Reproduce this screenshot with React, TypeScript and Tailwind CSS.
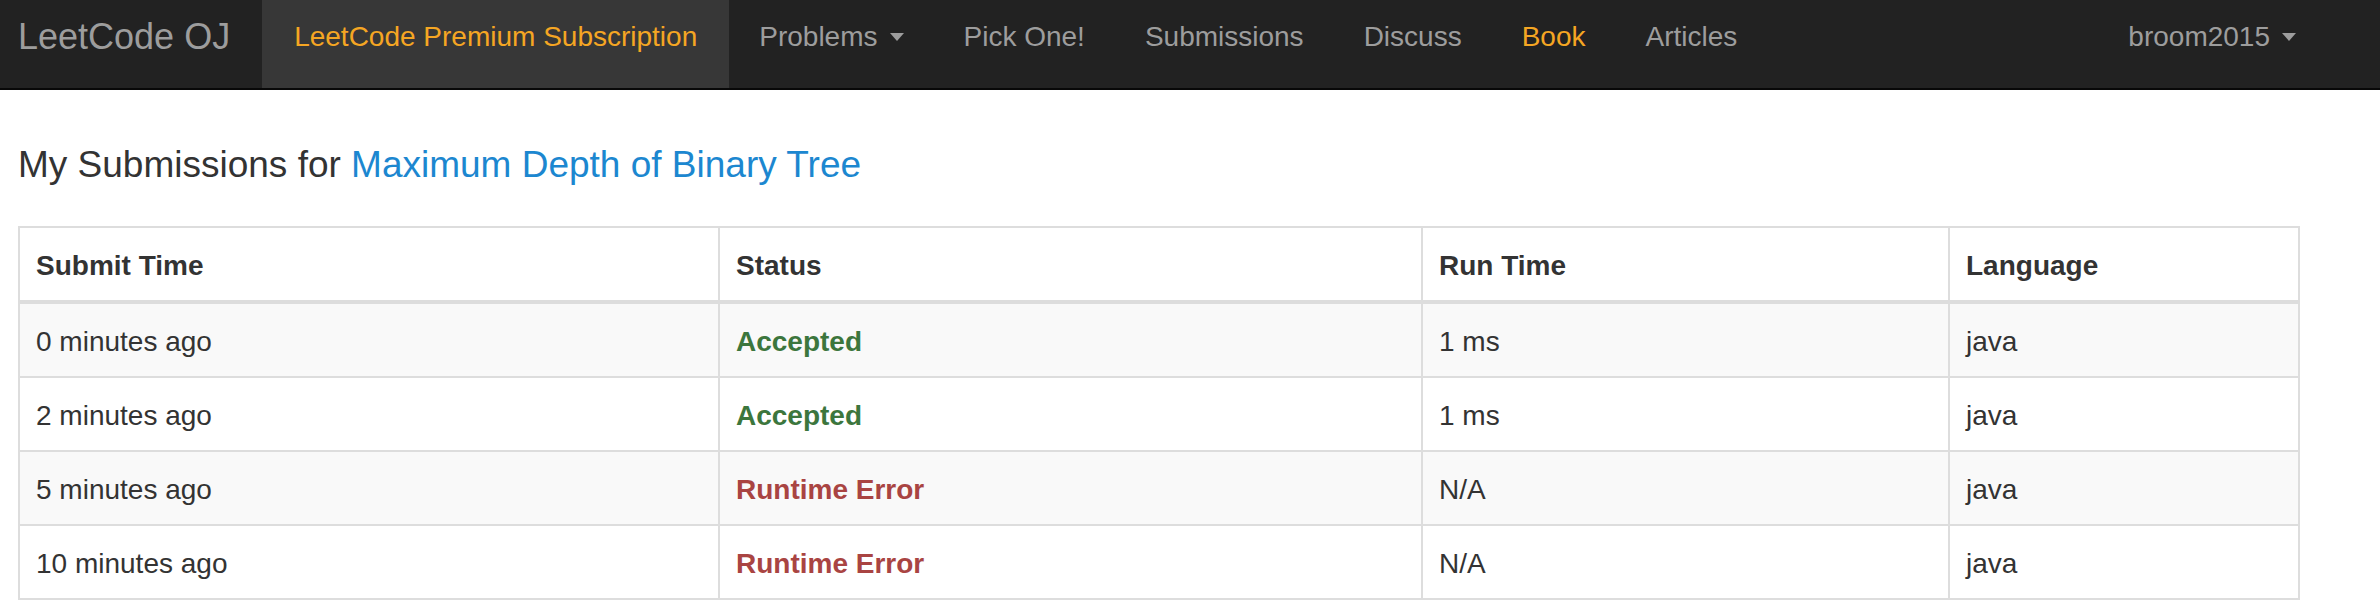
const submissions = [
  { time: "0 minutes ago", status: "Accepted", runtime: "1 ms", lang: "java" },
  { time: "2 minutes ago", status: "Accepted", runtime: "1 ms", lang: "java" },
  { time: "5 minutes ago", status: "Runtime Error", runtime: "N/A", lang: "java" },
  { time: "10 minutes ago", status: "Runtime Error", runtime: "N/A", lang: "java" },
];

function Caret() {
  return (
    <svg className="ml-[12px] mt-[16px] h-[8px] w-[14px]" viewBox="0 0 14 8">
      <path d="M0 0 L14 0 L7 8 Z" fill="currentColor" />
    </svg>
  );
}

function NavLink({ label, active, orange, caret }: { label: string; active?: boolean; orange?: boolean; caret?: boolean }) {
  return (
    <a
      href="#"
      className={
        "flex h-[88px] items-start pt-[17px] text-[28px] leading-[40px] " +
        (active ? "bg-[#373737] px-[32px] " : "px-[30px] ") +
        (orange ? "text-[#f5a623]" : "text-[#9d9d9d]")
      }
    >
      <span>{label}</span>
      {caret && <Caret />}
    </a>
  );
}

export default function App() {
  return (
    <div className="min-h-[616px] bg-white text-[#333]" style={{ fontFamily: '"Liberation Sans", Arial, Helvetica, sans-serif' }}>
      {/* Navbar */}
      <nav className="flex h-[90px] border-b-2 border-[#080808] bg-[#222] pr-[54px]">
        <a href="#" className="h-[88px] pl-[18px] pr-[32px] pt-[19px] text-[36px] leading-[36px] text-[#9d9d9d]">
          LeetCode OJ
        </a>
        <NavLink label="LeetCode Premium Subscription" active orange />
        <NavLink label="Problems" caret />
        <NavLink label="Pick One!" />
        <NavLink label="Submissions" />
        <NavLink label="Discuss" />
        <NavLink label="Book" orange />
        <NavLink label="Articles" />
        <div className="ml-auto">
          <NavLink label="broom2015" caret />
        </div>
      </nav>

      {/* Content */}
      <div className="pl-[18px]">
        <h4 className="mt-[55px] mb-[41px] text-[37px] font-medium leading-[40px]">
          My Submissions for{" "}
          <a href="#" className="text-[#1c87d0]">
            Maximum Depth of Binary Tree
          </a>
        </h4>

        <table className="w-[2280px] table-fixed border-collapse border-2 border-[#ddd] text-[28px] leading-[40px]">
          <colgroup>
            <col className="w-[700px]" />
            <col className="w-[703px]" />
            <col className="w-[527px]" />
            <col className="w-[350px]" />
          </colgroup>
          <thead>
            <tr>
              <th className="border-2 border-b-4 border-[#ddd] px-[16px] pt-[18px] pb-[14px] text-left font-bold">Submit Time</th>
              <th className="border-2 border-b-4 border-[#ddd] px-[16px] pt-[18px] pb-[14px] text-left font-bold">Status</th>
              <th className="border-2 border-b-4 border-[#ddd] px-[16px] pt-[18px] pb-[14px] text-left font-bold">Run Time</th>
              <th className="border-2 border-b-4 border-[#ddd] px-[16px] pt-[18px] pb-[14px] text-left font-bold">Language</th>
            </tr>
          </thead>
          <tbody>
            {submissions.map((s, i) => (
              <tr key={i} className={i % 2 === 0 ? "bg-[#f9f9f9]" : "bg-white"}>
                <td className="border-2 border-[#ddd] px-[16px] pt-[18px] pb-[14px]">{s.time}</td>
                <td className="border-2 border-[#ddd] px-[16px] pt-[18px] pb-[14px]">
                  <a href="#" className={"font-bold " + (s.status === "Accepted" ? "text-[#3c763d]" : "text-[#a94442]")}>
                    {s.status}
                  </a>
                </td>
                <td className="border-2 border-[#ddd] px-[16px] pt-[18px] pb-[14px]">{s.runtime}</td>
                <td className="border-2 border-[#ddd] px-[16px] pt-[18px] pb-[14px]">{s.lang}</td>
              </tr>
            ))}
          </tbody>
        </table>
      </div>
    </div>
  );
}
